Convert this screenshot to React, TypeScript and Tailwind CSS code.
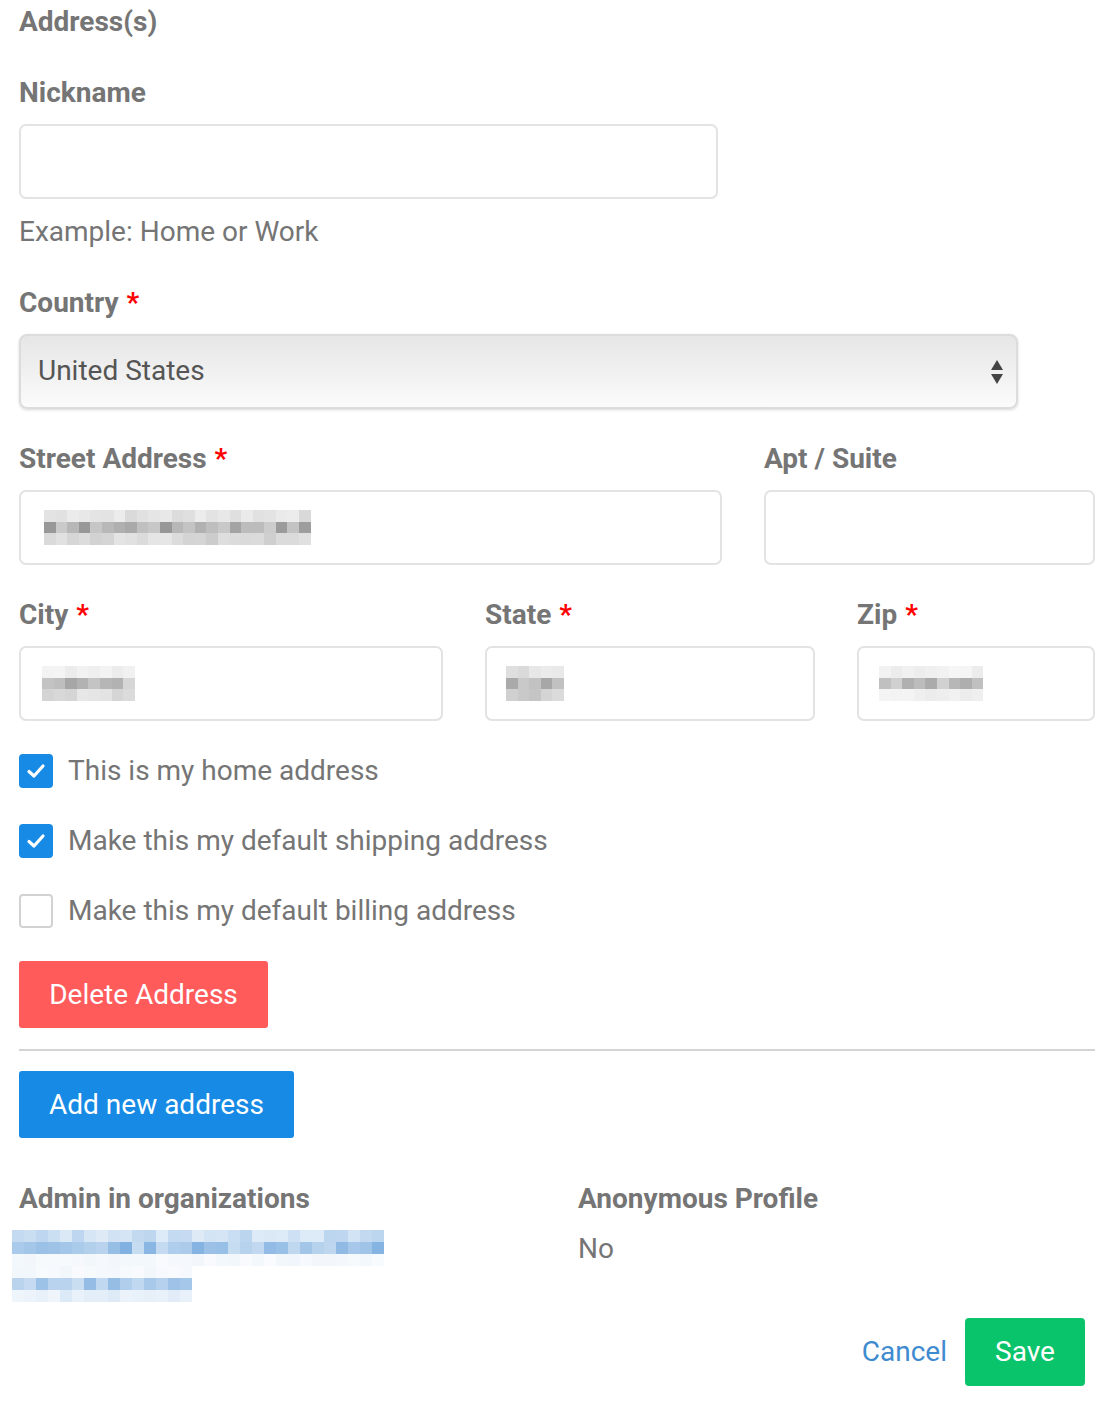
import React from "react";

function rand(seed: number) {
  let s = seed;
  return () => {
    s = (s * 9301 + 49297) % 233280;
    return s / 233280;
  };
}

function Pixels({
  cols,
  rows,
  cell,
  seed,
  rgb,
  strong,
}: {
  cols: number;
  rows: number;
  cell: number;
  seed: number;
  rgb: string;
  strong: number[];
}) {
  const r = rand(seed);
  return (
    <div className="flex flex-col">
      {Array.from({ length: rows }).map((_, y) => (
        <div key={y} className="flex">
          {Array.from({ length: cols }).map((_, x) => {
            const base = strong[y] ?? 0.1;
            const a = Math.max(0, Math.min(1, base * (0.55 + r() * 0.7)));
            return (
              <div
                key={x}
                style={{ width: cell, height: cell, background: `rgba(${rgb},${a})` }}
              />
            );
          })}
        </div>
      ))}
    </div>
  );
}

const label = "text-[28px] leading-[44px] font-bold text-[#757575]";
const input =
  "h-[75px] rounded-[7px] border-2 border-[#e3e3e3] bg-white flex items-center";

function Req() {
  return <span className="text-[#ff0000] ml-[8px]">*</span>;
}

function Check({ checked, text }: { checked: boolean; text: string }) {
  return (
    <div className="flex items-center h-[44px]">
      {checked ? (
        <div className="w-[34px] h-[34px] rounded-[4px] bg-[#168ae5] flex items-center justify-center">
          <svg width="22" height="22" viewBox="0 0 22 22">
            <path d="M4 11.5 L9 16 L18 6" fill="none" stroke="white" strokeWidth="3.2" strokeLinecap="round" strokeLinejoin="round" />
          </svg>
        </div>
      ) : (
        <div className="w-[34px] h-[34px] rounded-[4px] border-2 border-[#d2d2d2] bg-white" />
      )}
      <span className="ml-[15px] text-[28px] text-[#757575]">{text}</span>
    </div>
  );
}

export default function App() {
  return (
    <div className="w-[1106px] h-[1416px] bg-white" style={{ fontFamily: "Roboto, 'Liberation Sans', sans-serif" }}>
      <div className="pl-[19px] w-[1095px] flex flex-col">
        <div className={label}>Address(s)</div>

        <div className={label + " mt-[27px]"}>Nickname</div>
        <div className={input + " w-[699px] mt-[9px] h-[74px]"} />
        <div className="mt-[11px] text-[28px] leading-[44px] text-[#757575]">Example: Home or Work</div>

        <div className={label + " mt-[27px]"}>
          Country<Req />
        </div>
        <div className="mt-[9px] w-[999px] h-[75px] rounded-[8px] border-2 border-[#dcdcdc] bg-gradient-to-b from-[#e6e6e6] to-[#fbfbfb] shadow-[0_1px_3px_rgba(0,0,0,0.15)] flex items-center justify-between pl-[17px] pr-[12px]">
          <span className="text-[28px] text-[#555] -mt-[2px]">United States</span>
          <svg width="14" height="26" viewBox="0 0 14 26">
            <path d="M7 1 L13 11 L1 11 Z" fill="#444" />
            <path d="M1 15 L13 15 L7 25 Z" fill="#444" />
          </svg>
        </div>

        <div className="mt-[28px] flex gap-[42px]">
          <div className="flex flex-col w-[703px]">
            <div className={label}>
              Street Address<Req />
            </div>
            <div className={input + " mt-[9px] h-[75px] pl-[23px]"}>
              <Pixels cols={23} rows={3} cell={11.6} seed={7} rgb="150,150,150" strong={[0.3, 0.8, 0.4]} />
            </div>
          </div>
          <div className="flex flex-col w-[331px]">
            <div className={label}>Apt / Suite</div>
            <div className={input + " mt-[9px] h-[75px]"} />
          </div>
        </div>

        <div className="mt-[28px] flex gap-[42px]">
          <div className="flex flex-col w-[424px]">
            <div className={label}>
              City<Req />
            </div>
            <div className={input + " mt-[9px] pl-[21px]"}>
              <Pixels cols={8} rows={3} cell={11.6} seed={3} rgb="150,150,150" strong={[0.15, 0.7, 0.35]} />
            </div>
          </div>
          <div className="flex flex-col w-[330px]">
            <div className={label}>
              State<Req />
            </div>
            <div className={input + " mt-[9px] pl-[19px]"}>
              <Pixels cols={5} rows={3} cell={11.6} seed={11} rgb="150,150,150" strong={[0.3, 0.75, 0.45]} />
            </div>
          </div>
          <div className="flex flex-col w-[238px]">
            <div className={label}>
              Zip<Req />
            </div>
            <div className={input + " mt-[9px] pl-[20px]"}>
              <Pixels cols={9} rows={3} cell={11.6} seed={5} rgb="150,150,150" strong={[0.15, 0.7, 0.15]} />
            </div>
          </div>
        </div>

        <div className="mt-[28px] flex flex-col gap-[26px]">
          <Check checked text="This is my home address" />
          <Check checked text="Make this my default shipping address" />
          <Check checked={false} text="Make this my default billing address" />
        </div>

        <button className="mt-[28px] w-[249px] h-[67px] rounded-[3px] bg-[#ff5b5b] text-white text-[28px] text-center">
          Delete Address
        </button>

        <div className="mt-[21px] h-[2px] bg-[#d4d4d4]" />

        <button className="mt-[20px] w-[275px] h-[67px] rounded-[3px] bg-[#168ae5] text-white text-[28px] text-center">
          Add new address
        </button>

        <div className="mt-[39px] flex">
          <div className="w-[559px] flex flex-col">
            <div className={label}>Admin in organizations</div>
            <div className="-ml-[7px] mt-[9px] flex flex-col">
              <Pixels cols={31} rows={3} cell={12} seed={13} rgb="70,140,210" strong={[0.3, 0.55, 0.06]} />
              <Pixels cols={15} rows={3} cell={12} seed={17} rgb="70,140,210" strong={[0.06, 0.5, 0.15]} />
            </div>
          </div>
          <div className="flex flex-col">
            <div className={label}>Anonymous Profile</div>
            <div className="mt-[6px] text-[28px] leading-[44px] text-[#757575]">No</div>
          </div>
        </div>

        <div className="mt-[16px] flex justify-end items-center pr-[10px]">
          <span className="text-[28px] text-[#3f8bd0] mr-[18px]">Cancel</span>
          <button className="w-[120px] h-[68px] rounded-[4px] bg-[#0ac46b] text-white text-[28px]">Save</button>
        </div>
      </div>
    </div>
  );
}
